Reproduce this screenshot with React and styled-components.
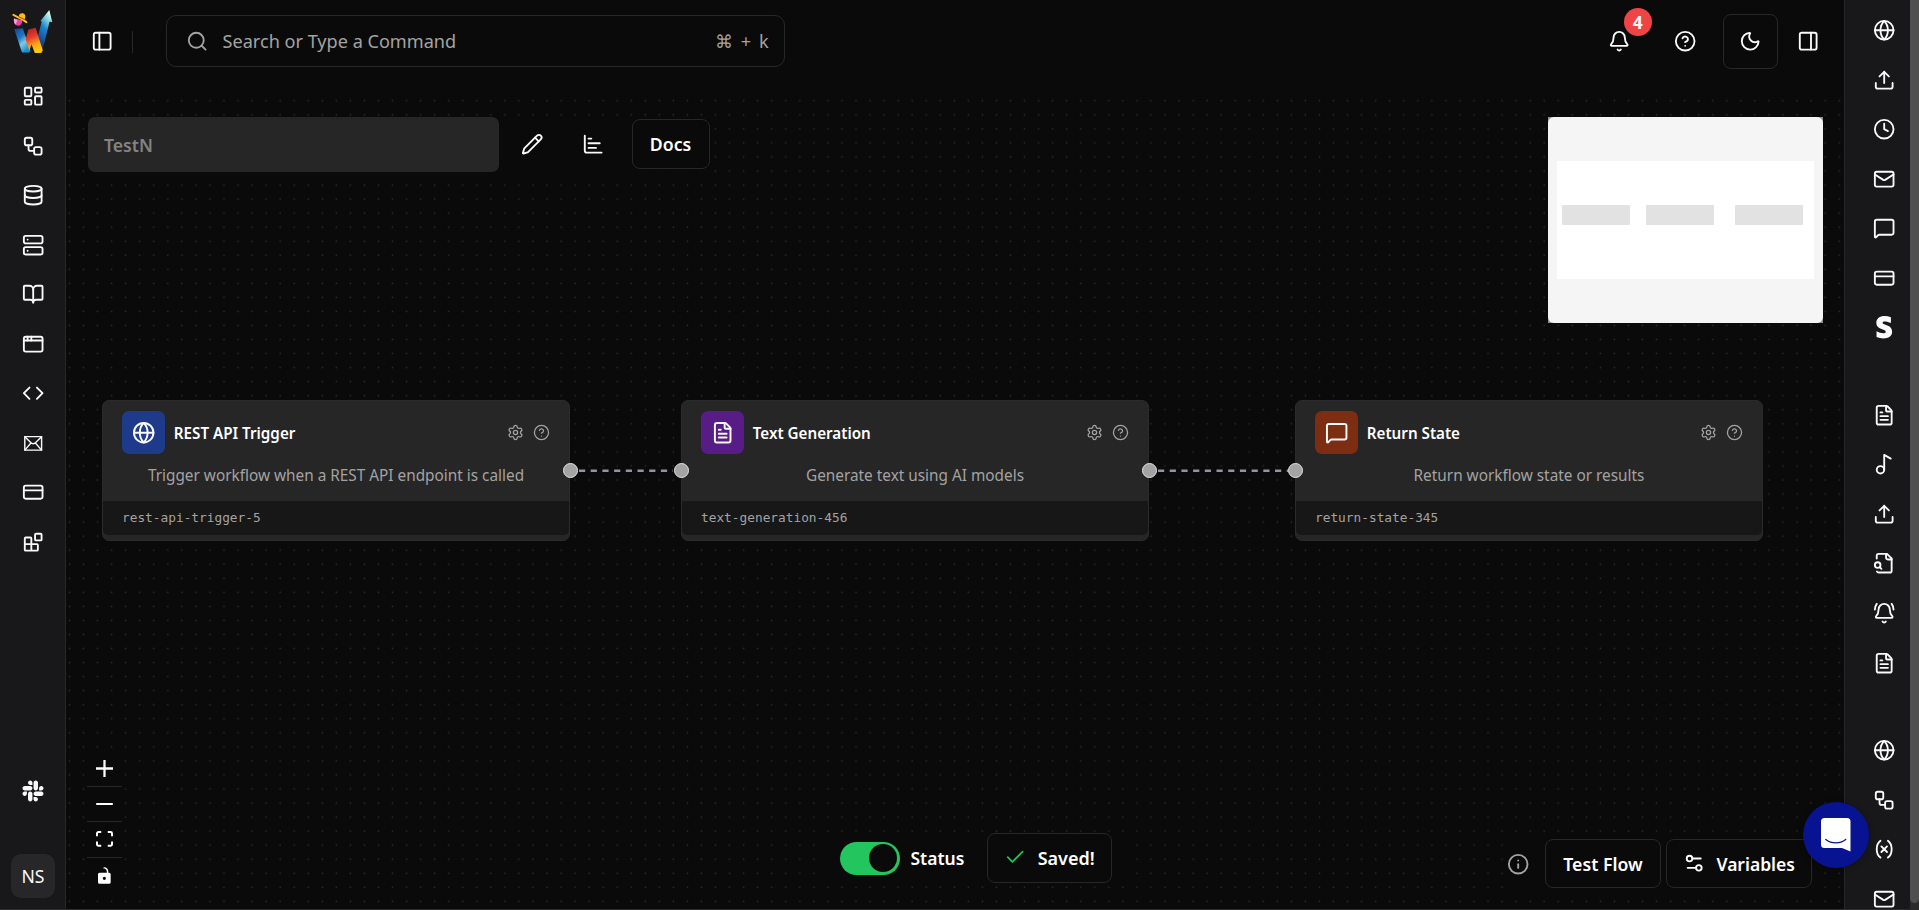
import React from "react";
import styled, { createGlobalStyle, css } from "styled-components";
import {
  LayoutDashboard, Workflow, Database, Server, BookOpen, AppWindow, Code, CreditCard,
  PanelLeft, PanelRight, Search, Bell, CircleHelp, Moon, Pencil, ChartBar, Globe, Upload,
  Clock, Mail, MessageSquare, FileText, Music2, BellRing, Check, Info, Settings2,
  Settings,
} from "lucide-react";
import { FaSlack, FaStripeS } from "react-icons/fa6";

const GlobalStyle = createGlobalStyle`
  * { box-sizing: border-box; }
  body { margin: 0; overflow: hidden; background: #0a0a0a; color: #fafafa; font-family: "Noto Sans", "Open Sans", sans-serif; }
  svg { display: block; flex: none; }
`;

const ICON = 22.4;

const Page = styled.div`
  display: flex;
  position: relative;
  height: 910px;
  width: 1919px;
  overflow: hidden;
`;

const Sidebar = styled.nav`
  display: flex;
  flex-direction: column;
  align-items: center;
  flex: none;
  width: 66px;
  background: #18181b;
  overflow: hidden;
  border-bottom: 1px solid #2c2c2e;
  ${(p) =>
    p.$side === "left"
      ? css`border-right: 1px solid #27272a; padding-left: 1px;`
      : css`border-left: 1px solid #27272a; padding: 5.4px 0 0 13px;`}
`;

const LogoSlot = styled.div`
  flex: none;
  height: 71.5px;
  padding: 9px 0 0 0;
`;

const NavItem = styled.div`
  display: flex;
  align-items: center;
  justify-content: center;
  flex: none;
  width: 50px;
  height: 49.55px;
  color: #fafafa;
`;

const NavGap = styled.div`
  flex: none;
  height: 38px;
`;

const SidebarFoot = styled.div`
  display: flex;
  flex-direction: column;
  align-items: center;
  gap: 38px;
  margin-top: auto;
  padding-bottom: 11px;
`;

const Avatar = styled.div`
  display: grid;
  place-items: center;
  width: 44px;
  height: 44px;
  border-radius: 10px;
  background: #27272a;
  font-size: 17.6px;
`;

const ScrollTrack = styled.div`
  flex: none;
  width: 9px;
  background: #2a2a2b;
`;

const ScrollThumb = styled.div`
  height: 903px;
  border-radius: 0 0 5px 5px;
  background: #4f4f4f;
`;

const Main = styled.main`
  display: flex;
  flex-direction: column;
  flex: 1;
  min-width: 0;
  border-bottom: 1px solid #2c2c2e;
`;

const Header = styled.header`
  display: flex;
  align-items: center;
  flex: none;
  height: 88px;
  padding: 0 24.6px 5px 24.8px;
`;

const Divider = styled.div`
  width: 1px;
  height: 22px;
  margin: 0 33px 0 19px;
  background: #27272a;
`;

const SearchBox = styled.div`
  display: flex;
  align-items: center;
  width: 619px;
  height: 52px;
  margin-top: -1px;
  padding: 0 15px 0 19px;
  border: 1px solid #27272a;
  border-radius: 10px;
  color: #a3a3a3;
  font-size: 18.1px;
`;

const SearchHint = styled.span`
  flex: 1;
  padding-left: 14px;
`;

const Shortcut = styled.span`
  letter-spacing: 0.6px;
  word-spacing: 2px;
`;

const HeaderActions = styled.div`
  display: flex;
  align-items: center;
  margin-left: auto;
`;

const HeaderButton = styled.div`
  position: relative;
  display: grid;
  place-items: center;
  width: 55px;
  height: 55px;
  margin-right: ${(p) => p.$gap || 0}px;
  border: 1px solid ${(p) => (p.$outlined ? "#27272a" : "transparent")};
  border-radius: 8px;
`;

const CountBadge = styled.span`
  position: absolute;
  left: 31px;
  top: -7px;
  display: grid;
  place-items: center;
  width: 28px;
  height: 28px;
  border-radius: 50%;
  background: #ef4444;
  font: 700 17.4px/28px "Noto Sans", sans-serif;
`;

const Canvas = styled.section`
  position: relative;
  flex: 1;
  overflow: hidden;
`;

const CanvasDrawing = styled.svg`
  position: absolute;
  inset: 0;
  width: 100%;
  height: 100%;
`;

const FlowNode = styled.article`
  position: absolute;
  left: ${(p) => p.$left}px;
  top: 312px;
  width: 468px;
  height: 141px;
  border: 1px solid #2b2b2b;
  border-radius: 7px;
  background: #262626;
`;

const NodeHead = styled.div`
  display: flex;
  align-items: center;
  padding: 10px 19.5px 0 18.8px;
`;

const NodeIcon = styled.div`
  display: grid;
  place-items: center;
  width: 43px;
  height: 43px;
  border-radius: 7px;
  background: ${(p) => p.$color};
`;

const NodeTitle = styled.h3`
  flex: 1;
  margin: 0 0 0 9px;
  color: #fff;
  font-size: 15.2px;
  font-weight: 600;
  line-height: 22px;
`;

const NodeTools = styled.div`
  display: flex;
  gap: 8.5px;
  margin-top: -1px;
  color: #a3a3a3;
`;

const NodeText = styled.p`
  margin: 10px 0 0;
  height: 37px;
  color: #a3a3a3;
  font-size: 15.35px;
  line-height: 22px;
  text-align: center;
`;

const NodeId = styled.div`
  display: flex;
  align-items: center;
  height: 34px;
  padding: 0 19px 1px;
  border-radius: 0 0 5px 5px;
  background: #171717;
  color: #a3a3a3;
  font: 12.8px "DejaVu Sans Mono", monospace;
`;

const Handle = styled.span`
  position: absolute;
  top: 62px;
  ${(p) => (p.$side === "left" ? "left: -8.5px" : "right: -8.5px")};
  width: 15px;
  height: 15px;
  border: 1px solid #e5e5e5;
  border-radius: 50%;
  background: #a3a3a3;
`;

const Panel = styled.div`
  position: absolute;
  display: flex;
  align-items: center;
  background: #0a0a0a;
`;

const TopPanel = styled(Panel)`
  left: 21.5px;
  top: 29px;
  height: 55px;
`;

const NameField = styled.div`
  display: flex;
  align-items: center;
  width: 411px;
  height: 55px;
  margin-right: 3px;
  padding: 0 16.5px;
  border-radius: 7px;
  background: #262626;
  color: #838383;
  font-size: 17.6px;
  font-weight: 600;
`;

const IconButton = styled.div`
  display: grid;
  place-items: center;
  width: 61px;
  height: 50px;
`;

const OutlineButton = styled.div`
  display: flex;
  align-items: center;
  justify-content: center;
  gap: ${(p) => p.$gap || 0}px;
  width: ${(p) => p.$width}px;
  height: ${(p) => p.$height || 50}px;
  padding-bottom: 1px;
  border: 1px solid #27272a;
  border-radius: 8px;
  background: #0a0a0a;
  color: #fff;
  font-size: ${(p) => p.$font || 17.7}px;
  font-weight: 600;
  white-space: nowrap;
`;

const DocsSlot = styled.div`
  margin: 0 0 1px 8px;
`;

const StatusPanel = styled(Panel)`
  left: 760px;
  top: 745px;
  height: 50px;
  padding: 0 14px;
`;

const Toggle = styled.div`
  display: flex;
  align-items: center;
  justify-content: flex-end;
  width: 60px;
  height: 33px;
  padding-right: 3px;
  border-radius: 17px;
  background: #22c55e;
  &::after {
    content: "";
    width: 28px;
    height: 28px;
    border-radius: 50%;
    background: #0a0a0a;
  }
`;

const StatusLabel = styled.span`
  width: 87px;
  padding: 0 0 1px 10.5px;
  color: #fff;
  font-size: 17.5px;
  font-weight: 600;
`;

const ActionPanel = styled(Panel)`
  right: 32px;
  top: 751px;
  gap: 5px;
  height: 49px;
`;

const ActionLabel = styled.span`
  padding-top: 2px;
`;

const InfoSlot = styled.div`
  margin-right: 11px;
  padding-top: 1px;
  color: #a3a3a3;
`;

const ZoomPanel = styled(Panel)`
  left: 21px;
  top: 663px;
  flex-direction: column;
  width: 35px;
`;

const ZoomButton = styled.div`
  display: grid;
  place-items: center;
  width: 35px;
  height: ${(p) => (p.$last ? 36 : 35.6)}px;
  border-bottom: ${(p) => (p.$last ? "0" : "1px solid #27272a")};
`;

const MiniMap = styled.div`
  position: absolute;
  right: 21px;
  top: 29px;
  width: 275px;
  height: 206px;
  background: #8f8f8f;
`;

const MiniSurface = styled.div`
  width: 275px;
  height: 206px;
  padding: 44px 9px;
  border-radius: 6px;
  background: #f5f5f5;
`;

const MiniView = styled.div`
  display: flex;
  align-items: flex-start;
  width: 257px;
  height: 118px;
  padding: 44px 0 0 5px;
  background: #fff;
`;

const MiniNode = styled.span`
  width: 68px;
  height: 20px;
  margin-right: ${(p) => p.$gap}px;
  border-radius: 1px;
  background: #e2e2e2;
`;

const ChatBubble = styled.div`
  position: absolute;
  left: 1803px;
  top: 802px;
  display: grid;
  place-items: center;
  width: 66px;
  height: 66px;
  border-radius: 50%;
  background: #071390;
  box-shadow: 0 1px 6px rgba(0, 0, 0, 0.3);
`;

const LineIcon = ({ children, size = ICON, width = 2 }) => (
  <svg width={size} height={size} viewBox="0 0 24 24" fill="none" stroke="currentColor" strokeWidth={width} strokeLinecap="round" strokeLinejoin="round">
    {children}
  </svg>
);

const BlocksIcon = () => (
  <LineIcon>
    <rect width="7" height="7" x="14" y="3" rx="1" />
    <path d="M10 21V8a1 1 0 0 0-1-1H4a1 1 0 0 0-1 1v12a1 1 0 0 0 1 1h12a1 1 0 0 0 1-1v-5a1 1 0 0 0-1-1H3" />
  </LineIcon>
);

const EnvelopeIcon = () => (
  <LineIcon width={1.5}>
    <rect x="3" y="5" width="18" height="14.4" />
    <path d="M3 5l6.600 6.600C10.800 12.900 13.200 12.900 14.400 11.600L21 5M3 19.400l6.600-7.600M21 19.400l-6.600-7.600" />
  </LineIcon>
);

const FileLensIcon = () => (
  <LineIcon>
    <path d="M14 2v4a2 2 0 0 0 2 2h4" />
    <path d="M4.268 21a2 2 0 0 0 1.727 1H18a2 2 0 0 0 2-2V7l-5-5H6a2 2 0 0 0-2 2v3" />
    <path d="m9 18-1.500-1.500" />
    <circle cx="5" cy="14" r="3" />
  </LineIcon>
);

const VariableIcon = () => (
  <LineIcon>
    <path d="M8 21s-4-3-4-9 4-9 4-9M16 3s4 3 4 9-4 9-4 9M15 9l-6 6M9 9l6 6" />
  </LineIcon>
);

const Logo = () => (
  <svg width="46" height="48" viewBox="10 8 46 48">
    <defs>
      <linearGradient id="left" x1="0" y1="0" x2="0.6" y2="1">
        <stop offset="0" stopColor="#123f8c" />
        <stop offset="0.45" stopColor="#1f7ac2" />
        <stop offset="0.7" stopColor="#7fcbe6" />
        <stop offset="1" stopColor="#1b8fd0" />
      </linearGradient>
      <linearGradient id="middle" x1="0" y1="0" x2="0.3" y2="1">
        <stop offset="0" stopColor="#a3191f" />
        <stop offset="0.45" stopColor="#e8402b" />
        <stop offset="0.75" stopColor="#f9a01b" />
        <stop offset="1" stopColor="#fdc613" />
      </linearGradient>
      <linearGradient id="arrow" x1="0.7" y1="0" x2="0.3" y2="1">
        <stop offset="0" stopColor="#e9fbf2" />
        <stop offset="0.22" stopColor="#7fd0dc" />
        <stop offset="0.45" stopColor="#1d86cf" />
        <stop offset="0.65" stopColor="#1c63ad" />
        <stop offset="1" stopColor="#14235c" />
      </linearGradient>
    </defs>
    <path d="M49.300 9 52.300 21.300 49.600 20.600 43.200 46 41.200 50.500 37.600 36.500 41.700 20.800 40.400 20z" fill="url(#arrow)" />
    <path d="M14.200 28 22.800 27.200 30.400 49.500 29.200 51.400H22z" fill="url(#left)" />
    <path d="M28.300 28.600 35.600 26.800 42.800 49.200 41.200 52H34.800L31.500 43.500 29.400 49.600 25.600 38.600z" fill="url(#middle)" />
    <path d="M14 17.500C13.200 22 15.500 24.600 18.200 24.800 21 24.400 22.600 22 22 19z" fill="#ee3fa8" />
    <path d="M14 17.500C13.600 20 14.200 22.400 15.600 23.800L17.500 19z" fill="#f9a5cf" />
    <path d="M18.800 15.600C19 12.600 21.600 11.600 24 12.800 25.800 14 25.600 16.400 24.400 18.600z" fill="#fbbf13" />
    <path d="M13.400 13.900C17 15.600 23 18.200 26.400 21.200" stroke="#fbc31c" strokeWidth="2" fill="none" strokeLinecap="round" />
    <path d="M18.600 15.700 24.600 18.600" stroke="#c23a12" strokeWidth="0.9" />
  </svg>
);

const leftItems = [LayoutDashboard, Workflow, Database, Server, BookOpen, AppWindow, Code, EnvelopeIcon, CreditCard, BlocksIcon];
const rightGroups = [
  [Globe, Upload, Clock, Mail, MessageSquare, CreditCard, FaStripeS],
  [FileText, Music2, Upload, FileLensIcon, BellRing, FileText],
  [Globe, Workflow, VariableIcon, Mail],
];

const nodes = [
  { left: 36, title: "REST API Trigger", text: "Trigger workflow when a REST API endpoint is called", id: "rest-api-trigger-5", color: "#1e3a8a", icon: Globe, handles: ["right"] },
  { left: 615, title: "Text Generation", text: "Generate text using AI models", id: "text-generation-456", color: "#581c87", icon: FileText, handles: ["left", "right"] },
  { left: 1229, title: "Return State", text: "Return workflow state or results", id: "return-state-345", color: "#7c2d12", icon: MessageSquare, handles: ["left"] },
];

const WorkflowNode = ({ node }) => {
  const Icon = node.icon;
  return (
    <FlowNode $left={node.left}>
      <NodeHead>
        <NodeIcon $color={node.color}><Icon size={23.4} /></NodeIcon>
        <NodeTitle>{node.title}</NodeTitle>
        <NodeTools>
          <Settings size={17} strokeWidth={1.8} />
          <CircleHelp size={17} strokeWidth={1.8} />
        </NodeTools>
      </NodeHead>
      <NodeText>{node.text}</NodeText>
      <NodeId>{node.id}</NodeId>
      {node.handles.map((side) => <Handle key={side} $side={side} />)}
    </FlowNode>
  );
};

export default function App() {
  return (
    <Page>
      <GlobalStyle />
      <Sidebar $side="left">
        <LogoSlot><Logo /></LogoSlot>
        {leftItems.map((Icon, i) => <NavItem key={i}><Icon size={ICON} /></NavItem>)}
        <SidebarFoot>
          <NavItem><FaSlack size={24} /></NavItem>
          <Avatar>NS</Avatar>
        </SidebarFoot>
      </Sidebar>

      <Main>
        <Header>
          <PanelLeft size={ICON} />
          <Divider />
          <SearchBox>
            <Search size={ICON} />
            <SearchHint>Search or Type a Command</SearchHint>
            <Shortcut>⌘ + k</Shortcut>
          </SearchBox>
          <HeaderActions>
            <HeaderButton $gap={11}><Bell size={ICON} /><CountBadge>4</CountBadge></HeaderButton>
            <HeaderButton $gap={10.4}><CircleHelp size={ICON} /></HeaderButton>
            <HeaderButton $outlined $gap={19}><Moon size={ICON} /></HeaderButton>
            <PanelRight size={ICON} />
          </HeaderActions>
        </Header>

        <Canvas>
          <CanvasDrawing>
            <defs>
              <pattern id="dots" x="-3.5" y="5.8" width="14.045" height="14.045" patternUnits="userSpaceOnUse">
                <circle cx="7" cy="7" r="0.8" fill="#2c2c2c" />
              </pattern>
            </defs>
            <rect width="100%" height="100%" fill="url(#dots)" />
            <g stroke="#8f95a5" strokeWidth="2.4" strokeDasharray="6.2 5.5">
              <path d="M513 382.700H607" />
              <path d="M1092 382.700H1222" />
            </g>
          </CanvasDrawing>
          {nodes.map((node) => <WorkflowNode key={node.id} node={node} />)}

          <TopPanel>
            <NameField>TestN</NameField>
            <IconButton><Pencil size={ICON} /></IconButton>
            <IconButton><ChartBar size={ICON} /></IconButton>
            <DocsSlot><OutlineButton $width={78}>Docs</OutlineButton></DocsSlot>
          </TopPanel>

          <MiniMap>
            <MiniSurface>
              <MiniView>
                <MiniNode $gap={16} />
                <MiniNode $gap={21} />
                <MiniNode $gap={0} />
              </MiniView>
            </MiniSurface>
          </MiniMap>

          <ZoomPanel>
            <ZoomButton>
              <svg width="17" height="17" viewBox="0 0 32 32" fill="#fff"><path d="M32 18.133H18.133V32h-4.266V18.133H0v-4.266h13.867V0h4.266v13.867H32z" /></svg>
            </ZoomButton>
            <ZoomButton>
              <svg width="17" height="2.6" viewBox="0 0 32 5" fill="#fff"><path d="M0 0h32v4.200H0z" /></svg>
            </ZoomButton>
            <ZoomButton>
              <svg width="17" height="16" viewBox="0 0 32 30" fill="#fff"><path d="M3.692 4.630c0-.53.4-.938.939-.938h5.215V0H4.708C2.130 0 0 2.054 0 4.630v5.216h3.692V4.631zM27.354 0h-5.200v3.692h5.170c.53 0 .984.4.984.939v5.215H32V4.631A4.624 4.624 0 0027.354 0zm.954 24.830c0 .532-.4.940-.939.940h-5.215v3.768h5.215c2.577 0 4.631-2.130 4.631-4.707v-5.139h-3.692v5.139zm-23.677.940c-.531 0-.939-.4-.939-.940v-5.138H0v5.139c0 2.577 2.130 4.707 4.708 4.707h5.138V25.770H4.631z" /></svg>
            </ZoomButton>
            <ZoomButton $last>
              <svg width="13" height="17" viewBox="0 0 25 32" fill="#fff"><path d="M21.333 10.667H19.810V7.619C19.810 3.429 16.380 0 12.190 0c-4.114 1.828-1.370 2.133.305 2.438 1.676.305 4.420 2.590 4.420 5.181v3.048H3.047A3.056 3.056 0 000 13.714v15.238A3.056 3.056 0 003.048 32h18.285a3.056 3.056 0 003.048-3.048V13.714a3.056 3.056 0 00-3.048-3.047zM12.190 24.533a3.056 3.056 0 01-3.047-3.047 3.056 3.056 0 013.047-3.048 3.056 3.056 0 013.048 3.048 3.056 3.056 0 01-3.048 3.047z" /></svg>
            </ZoomButton>
          </ZoomPanel>

          <StatusPanel>
            <Toggle />
            <StatusLabel>Status</StatusLabel>
            <OutlineButton $width={125} $gap={11} $font={18}><Check size={ICON} color="#22c55e" strokeWidth={1.8} />Saved!</OutlineButton>
          </StatusPanel>

          <ActionPanel>
            <InfoSlot><Info size={ICON} /></InfoSlot>
            <OutlineButton $width={116} $height={49}><ActionLabel>Test Flow</ActionLabel></OutlineButton>
            <OutlineButton $width={146} $height={49} $gap={11} $font={17.5}><Settings2 size={ICON} /><ActionLabel>Variables</ActionLabel></OutlineButton>
          </ActionPanel>
        </Canvas>
      </Main>

      <Sidebar $side="right">
        {rightGroups.map((group, g) => (
          <React.Fragment key={g}>
            {g > 0 && <NavGap />}
            {group.map((Icon, i) => <NavItem key={i}><Icon size={ICON} /></NavItem>)}
          </React.Fragment>
        ))}
      </Sidebar>
      <ScrollTrack><ScrollThumb /></ScrollTrack>

      <ChatBubble>
        <svg width="30" height="34" viewBox="0 0 30 34">
          <path d="M3.500 0h22.500A3.500 3.500 0 0 1 29.500 3.500V33.500L21 30H3.500A3.500 3.500 0 0 1 0 26.500V3.500A3.500 3.500 0 0 1 3.500 0z" fill="#fff" />
          <path d="M4.800 21.500C10.500 26 19 26 24.700 21.500" fill="none" stroke="#071390" strokeWidth="1.300" strokeLinecap="round" />
        </svg>
      </ChatBubble>
    </Page>
  );
}
